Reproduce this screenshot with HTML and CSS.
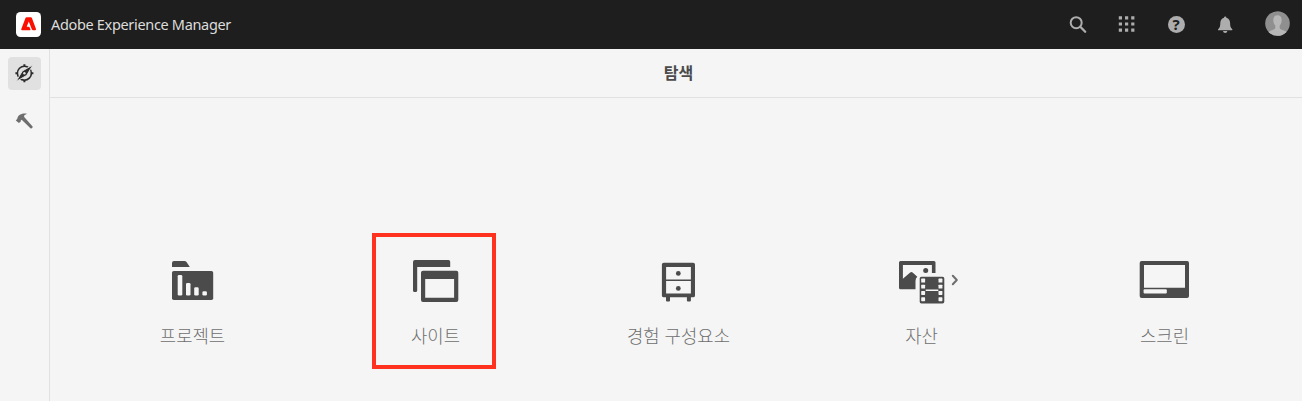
FILE: index.html
```html
<!DOCTYPE html>
<html lang="ko">
<head>
<meta charset="utf-8">
<title>Adobe Experience Manager</title>
<link rel="stylesheet" href="styles.css">
</head>
<body>
<header class="shell">
  <svg class="logo" viewBox="0 0 25 25"><rect width="25" height="25" rx="4.5" fill="#fff"/><path d="M10.600 5.200h4.200q.8 0 1.100.8l4.100 11.100q.3 1.100-.8 1.100h-2.100q-.9 0-1.200-.8L12.800 9.600l-2.100 5.200h2q.6 0 .8.500l1 2.200q.2.700-.5.700H5.900q-1-.1-.6-1.100L9.500 6q.3-.8 1.100-.8z" fill="#fa0f00"/></svg>
  <span class="brand">Adobe Experience Manager</span>
  <nav class="actions">
    <span class="action"><svg width="18" height="18" viewBox="0 0 18 18"><circle cx="7.200" cy="6.700" r="5.500" fill="none" stroke="#adadad" stroke-width="2"/><path d="M11.300 10.800 16.200 15.700" stroke="#adadad" stroke-width="2.300" stroke-linecap="round"/></svg></span>
    <span class="action"><svg width="18" height="18" viewBox="0 0 18 18" fill="#adadad"><path d="M.8.2H4v3.200H.8zM7 .2h3.200v3.200H7zM13.200.2h3.200v3.200h-3.200zM.8 6.400H4v3.200H.8zM7 6.400h3.200v3.200H7zM13.200 6.400h3.200v3.200h-3.200zM.8 12.600H4v3.200H.8zM7 12.600h3.200v3.200H7zM13.200 12.600h3.200v3.200h-3.200z"/></svg></span>
    <span class="action"><span class="help">?</span></span>
    <span class="action"><svg width="18" height="18" viewBox="0 0 18 18" fill="#adadad"><path d="M8 1.700q0-1.200 1.200-1.200t1.200 1.200c2.500.6 3.700 2.700 3.700 5.200 0 3.100.5 4.800 2 6.100.6.700.300 1.300-.4 1.300H2.700c-.7 0-1-.6-.4-1.300 1.500-1.300 2-3 2-6.100 0-2.500 1.200-4.600 3.700-5.200z"/><path d="M7 15.100h4.400q-.3 1.900-2.200 1.900T7 15.100z"/></svg></span>
    <span class="action user"><svg width="25" height="25" viewBox="0 0 25 25"><defs><clipPath id="round"><circle cx="12.500" cy="12.500" r="12.300"/></clipPath></defs><g clip-path="url(#round)"><rect width="25" height="25" fill="#8f8f8f"/><path d="M12.500 4.200c2.700 0 4.200 1.900 4.200 4.700 0 2.400-.8 4.300-2 5.500v2.600c0 2 6.600 2.300 7.800 5V25h-20v-3c1.200-2.700 7.800-3 7.800-5v-2.600c-1.200-1.200-2-3.100-2-5.500 0-2.800 1.500-4.700 4.200-4.700z" fill="#b7b7b7"/></g></svg></span>
  </nav>
</header>
<div class="layout">
  <aside class="rail">
    <span class="rail-item active"><svg width="20" height="20" viewBox="0 0 20 20"><circle cx="10.400" cy="10.200" r="7" fill="none" stroke="#2c2c2c" stroke-width="1.600"/><path d="M10.400 1.200v2.500M10.400 16.700v2.500M1.400 10.200h2.500M16.900 10.200h2.500" stroke="#2c2c2c" stroke-width="2"/><path d="M19 1.800 12.700 12.400 2 18.600 8.300 8z" fill="#2c2c2c" stroke="#e1e1e1" stroke-width="1"/><circle cx="10.400" cy="10.200" r="1.200" fill="#e1e1e1"/></svg></span>
    <span class="rail-item"><svg width="20" height="20" viewBox="0 0 20 20" fill="#6e6e6e"><path d="M1.800 9.400 3.300 7.700C3.700 4.500 7 1.900 12.200 2.600c.6.100.6.600.1.700-1.900.6-2.500 1.400-2.100 2.800L18.600 15.500c.5.800-1 2.500-1.900 1.900L7.700 8.700 6.700 9.400l.1 1.200-1.900 1.500z"/></svg></span>
  </aside>
  <main class="content">
    <h1 class="title">탐색</h1>
    <div class="tiles">
      <a class="tile">
        <svg class="tile-icon" viewBox="0 0 60 52"><path d="M10 12V8q0-2 2-2h10.500q1.200 0 2 1l3.300 5z"/><rect x="10" y="16" width="41.200" height="29" rx="1.800"/><g class="cut"><rect x="15.700" y="20" width="4.600" height="20.600" rx="1.300"/><rect x="24" y="28" width="4.500" height="12.600" rx="1.300"/><rect x="32.200" y="32.200" width="4.500" height="8.400" rx="1.300"/><rect x="40.400" y="36.200" width="4.500" height="4.400" rx="1.300"/></g></svg>
        <span class="label">프로젝트</span>
      </a>
      <a class="tile selected">
        <svg class="tile-icon" viewBox="0 0 60 52"><path d="M10 5h33.500q1.700 0 1.700 1.700V12H12.200v23.400q0 1.600-1.700 1.600H9.600Q8 37 8 35.400V7q0-2 2-2z"/><path fill-rule="evenodd" d="M18 15.700h33.300q2 0 2 2V45q0 2-2 2H18q-2 0-2-2V17.700q0-2 2-2zM20.200 24v18.700h28.900V24z"/></svg>
        <span class="label">사이트</span>
      </a>
      <a class="tile">
        <svg class="tile-icon" viewBox="0 0 60 52"><path fill-rule="evenodd" d="M15.800 7.700h29.300q1.900 0 1.900 1.900v30.800q0 1.900-1.900 1.900h-2.200v3.200q0 1-1 1h-2q-1 0-1-1v-3.200H22v3.200q0 1-1 1h-2q-1 0-1-1v-3.200h-2.200q-1.900 0-1.900-1.900V9.600q0-1.900 1.900-1.900zM18.100 12v12.600h24.800V12zM18.100 26.100v12.400h24.800V26.100z"/><circle cx="30.300" cy="18.400" r="2.400"/><circle cx="30.300" cy="33.400" r="2.400"/></svg>
        <span class="label">경험 구성요소</span>
      </a>
      <a class="tile">
        <svg class="tile-icon" viewBox="0 0 60 52"><path d="M9.500 6h33.500q1.500 0 1.500 1.500V18h-3.600v-8H11.900v13.700l7.300-6.200q1.200-1 2.400 0l4.700 4.300q-1.800 1.500-1.800 4.200v8.200h-15Q8 34.200 8 32.700V7.500Q8 6 9.500 6z"/><circle cx="34.700" cy="15.400" r="2.500"/><rect x="28.700" y="21.800" width="24.600" height="26.800" rx="1.800"/><g class="cut"><path d="M34.700 34.500h12.600V36H34.700z"/><rect x="30.200" y="23.600" width="3.900" height="3.900" rx=".6"/><rect x="30.200" y="29.700" width="3.900" height="3.900" rx=".6"/><rect x="30.200" y="36" width="3.900" height="3.900" rx=".6"/><rect x="30.200" y="42.300" width="3.900" height="3.900" rx=".6"/><rect x="47.500" y="23.600" width="3.900" height="3.900" rx=".6"/><rect x="47.500" y="29.700" width="3.900" height="3.900" rx=".6"/><rect x="47.500" y="36" width="3.900" height="3.900" rx=".6"/><rect x="47.500" y="42.300" width="3.900" height="3.900" rx=".6"/></g><path class="chevron" d="m61.800 20.800 4 4.200-4 4.200"/></svg>
        <span class="label">자산</span>
      </a>
      <a class="tile">
        <svg class="tile-icon" viewBox="0 0 60 52"><rect x="5.700" y="6" width="49.300" height="37" rx="1.900"/><path class="cut" d="M10 10h41v22.800H10z"/><rect class="cut" x="9.600" y="34.200" width="23.200" height="4.300" rx="1"/></svg>
        <span class="label">스크린</span>
      </a>
    </div>
  </main>
</div>
</body>
</html>
```

FILE: styles.css
```css
* { box-sizing: border-box; }
body {
  margin: 0;
  height: 401px;
  overflow: hidden;
  display: flex;
  flex-direction: column;
  background: #f5f5f5;
  font-family: "Noto Sans", "Noto Sans CJK KR", sans-serif;
}
.shell {
  flex: none;
  height: 49px;
  padding-left: 16px;
  display: flex;
  align-items: center;
  background: #1e1e1e;
}
.logo { width: 25px; height: 25px; }
.brand {
  margin-left: 10px;
  padding-bottom: 2px;
  color: #dcdcdc;
  font-size: 14.5px;
  letter-spacing: -0.33px;
  white-space: nowrap;
}
.actions { margin-left: auto; display: flex; height: 49px; }
.action { width: 49px; display: flex; align-items: center; justify-content: center; }
.user { width: 53px; padding: 0 0 3px 3px; }
.help {
  width: 17px;
  height: 17px;
  margin-left: 1px;
  border-radius: 50%;
  background: #adadad;
  color: #1e1e1e;
  font: bold 15px/17px "Noto Sans", sans-serif;
  text-align: center;
}
.layout { flex: 1; display: flex; }
.rail {
  width: 50px;
  padding: 8px 0 0 8px;
  display: flex;
  flex-direction: column;
  gap: 15px;
  border-right: 1px solid #e1e1e1;
}
.rail-item {
  width: 33px;
  height: 33px;
  padding: 0 1px 1px 0;
  border-radius: 4px;
  display: flex;
  align-items: center;
  justify-content: center;
}
.active { background: #e1e1e1; }
.content { flex: 1; }
.title {
  margin: 0;
  height: 49px;
  border-bottom: 1px solid #e1e1e1;
  text-align: center;
  color: #4b4b4b;
  font: bold 16px/46px "Noto Sans CJK KR", sans-serif;
  padding-left: 5px;
}
.tiles {
  display: grid;
  grid-template-columns: repeat(5, 243px);
  justify-items: center;
  padding: 135px 0 0 19px;
}
.tile {
  width: 124px;
  height: 136px;
  padding: 18px 0 0 2px;
  border: 4px solid transparent;
  display: flex;
  flex-direction: column;
  align-items: center;
}
.selected { border-color: #ff311f; }
.tile-icon {
  flex: none;
  width: 60px;
  height: 52px;
  overflow: visible;
  fill: #4b4b4b;
}
.cut { fill: #f5f5f5; }
.chevron { fill: none; stroke: #6e6e6e; stroke-width: 2; stroke-linecap: round; stroke-linejoin: round; }
.label {
  margin-top: 15px;
  padding-left: 2px;
  color: #6e6e6e;
  font: 300 17.8px/26px "Noto Sans CJK KR", sans-serif;
  white-space: nowrap;
}
```
